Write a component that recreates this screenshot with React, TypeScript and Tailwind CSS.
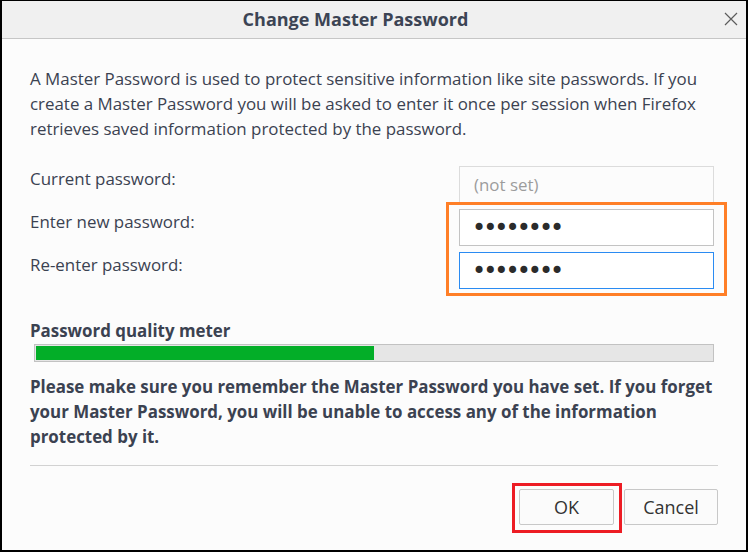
import React from 'react';

const font = { fontFamily: '"Open Sans", "Noto Sans", sans-serif' };
const dotFont = { fontFamily: '"DejaVu Sans", sans-serif' };

function Field({ label, children }: { label: string; children: React.ReactNode }) {
  return (
    <div className="flex items-start">
      <div className="w-[429px] text-[16.9px] leading-[25px]">{label}</div>
      {children}
    </div>
  );
}

export default function App() {
  return (
    <div
      className="relative w-[748px] h-[552px] overflow-hidden border-t border-l-2 border-r-2 border-b-2 border-black bg-[#fcfcfc] text-[#3b4251]"
      style={font}
    >
      {/* title bar */}
      <div className="relative flex h-[38px] items-center justify-center border-b border-[#c6c6c6] bg-[#f0f0f0]">
        <span className="ml-[-37px] text-[18px] font-bold text-[#3c4454]">Change Master Password</span>
        <svg className="absolute right-[8px] top-[11px]" width="14" height="14" viewBox="0 0 14 14">
          <path d="M1 1 L13 13 M13 1 L1 13" stroke="#5c5c5c" strokeWidth="1.2" fill="none" />
        </svg>
      </div>

      <div className="flex flex-col pl-[28px] pr-[28px] pt-[27px]">
        <p className="text-[16.9px] leading-[25px]">
          A Master Password is used to protect sensitive information like site passwords. If you
          create a Master Password you will be asked to enter it once per session when Firefox
          retrieves saved information protected by the password.
        </p>

        <div className="mt-[25px] flex flex-col gap-[6px]">
          <Field label="Current password:">
            <div className="flex h-[37px] w-[255px] items-center border border-[#dcdcdc] bg-[#fcfcfc] pl-[14px] text-[16.9px] text-[#9c9c9c]">
              (not set)
            </div>
          </Field>
          <Field label="Enter new password:">
            <input
              type="password"
              readOnly
              value="abcdefgh"
              style={dotFont}
              className="h-[37px] w-[255px] border border-[#c3c3c3] bg-white pl-[12px] text-[24px] tracking-[-3px] text-[#2b2b2b] outline-none"
            />
          </Field>
          <Field label="Re-enter password:">
            <input
              type="password"
              readOnly
              value="abcdefgh"
              style={dotFont}
              className="h-[37px] w-[255px] border border-[#2a8bf2] bg-white pl-[12px] text-[24px] tracking-[-3px] text-[#2b2b2b] outline-none"
            />
          </Field>
        </div>

        <div className="mt-[29px] text-[16.9px] font-bold leading-[25px]">Password quality meter</div>
        <div className="ml-[4px] mt-[1px] h-[18px] w-[680px] border border-[#c2c2c2] bg-[#e6e6e6] p-[1px]">
          <div className="h-full w-[338px] bg-[#03ae28]" />
        </div>

        <p className="mt-[12px] text-[16.9px] font-bold leading-[25px]">
          Please make sure you remember the Master Password you have set. If you forget your
          Master Password, you will be unable to access any of the information protected by it.
        </p>

        <div className="mt-[16px] h-px bg-[#d2d2d2]" />

        <div className="mt-[23px] flex justify-end gap-[10px]">
          <button className="h-[36px] w-[95px] rounded-[2px] border border-[#c8c8c8] bg-[#fbfbfb] text-[18px] text-[#333]">
            OK
          </button>
          <button className="h-[36px] w-[94px] rounded-[2px] border border-[#c8c8c8] bg-[#fbfbfb] text-[18px] text-[#333]">
            Cancel
          </button>
        </div>
      </div>

      {/* annotation boxes */}
      <div className="pointer-events-none absolute left-[444px] top-[201px] h-[94px] w-[281px] border-[3px] border-[#ff7f27]" />
      <div className="pointer-events-none absolute left-[510px] top-[482px] h-[50px] w-[110px] border-[3px] border-[#ed1c24]" />
    </div>
  );
}
